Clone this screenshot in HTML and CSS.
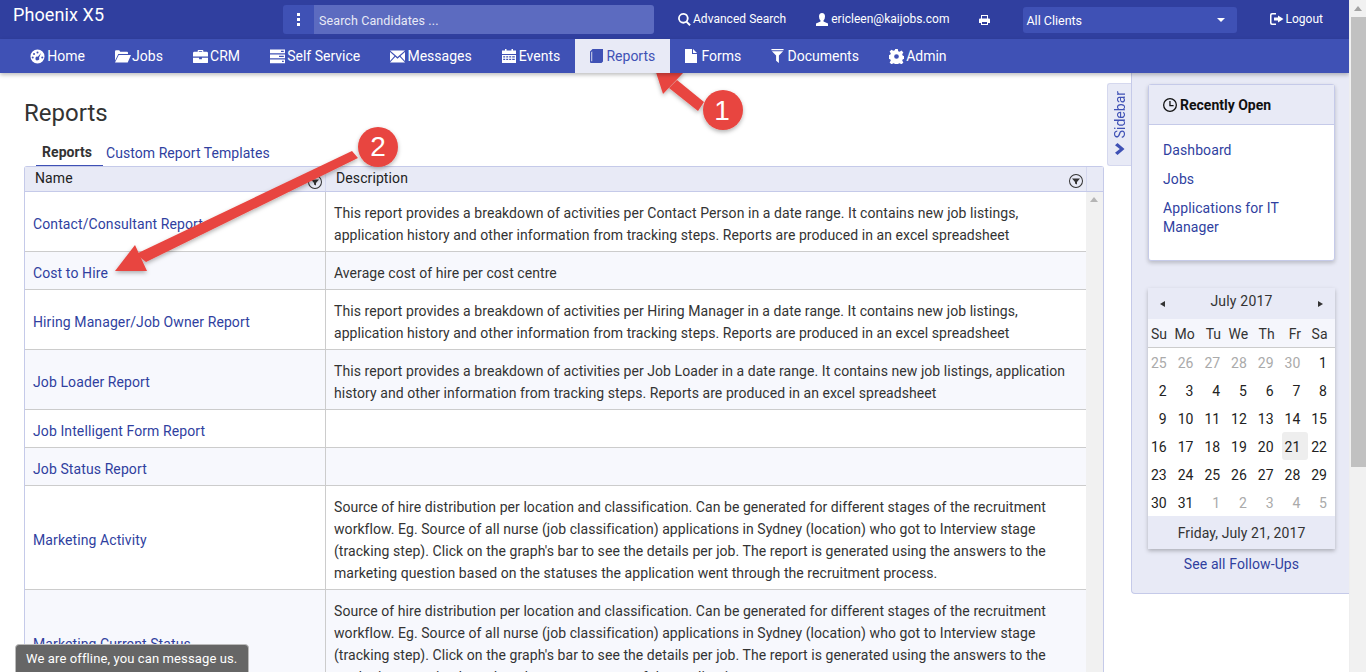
FILE: index.html
```html
<!DOCTYPE html>
<html lang="en">
<head>
<meta charset="utf-8">
<title>Phoenix X5 - Reports</title>
<link rel="stylesheet" href="styles.css">
</head>
<body>
<svg class="defs" width="0" height="0" aria-hidden="true">
  <symbol id="i-home" viewBox="0 0 16 16"><path fill-rule="evenodd" d="M8 .5a7.5 7.5 0 1 1 0 15 7.500 7.500 0 0 1 0-15zM8 2.600a1.100 1.100 0 1 0 0 2.200 1.100 1.100 0 0 0 0-2.200zM4.300 4.300a1.100 1.100 0 1 0 0 2.200 1.100 1.100 0 0 0 0-2.200zM2.900 8a1.100 1.100 0 1 0 0 2.200 1.100 1.100 0 0 0 0-2.200zM13.100 8a1.100 1.100 0 1 0 0 2.200 1.100 1.100 0 0 0 0-2.200zM11.800 4.300L8.300 8.200a2 2 0 1 0 1.300 1.100z"/></symbol>
  <symbol id="i-folder" viewBox="0 0 17 14"><path d="M0 12V2.200Q0 1 1.200 1h3.300l1 1.500h7.300q1 0 1 1V5H3.500L0 12zM4 6h13l-3.500 8H0z"/></symbol>
  <symbol id="i-case" viewBox="0 0 16 14"><path fill-rule="evenodd" d="M5 2V.8Q5 0 5.800 0h4.400q.8 0 .8.800V2h3.500q1.500 0 1.500 1.500V7H0V3.500Q0 2 1.500 2zM6.200 1v1h3.600V1zM0 8.200h6.500V10h3V8.200H16V13q0 1-1 1H1q-1 0-1-1z"/></symbol>
  <symbol id="i-tasks" viewBox="0 0 15 14"><path fill-rule="evenodd" d="M0 0h15v3.800H0zM11 1.200v1.400h2.800V1.200zM0 5h15v3.800H0zM9 6.200v1.400h4.800V6.200zM0 10h15v3.800H0zM12 11.200v1.400h1.800v-1.400z"/></symbol>
  <symbol id="i-mail" viewBox="0 0 15 12"><path d="M0 0h15L7.500 6.500zM0 1.500l4.500 4L0 10.500zM15 1.500l-4.500 4 4.500 5zM5.300 6.200l2.200 2 2.200-2L15 12H0z"/></symbol>
  <symbol id="i-cal" viewBox="0 0 14 14"><path fill-rule="evenodd" d="M0 1.500h3V0h1.500v1.500h5V0H11v1.500h3V5H0zM0 6h14v8H0zM1.200 7.200v1.300h2V7.200zM4.200 7.200v1.300h2V7.200zM7.200 7.200v1.300h2V7.200zM10.200 7.200v1.300h2.600V7.200zM1.200 9.700V11h2V9.700zM4.200 9.700V11h2V9.700zM7.200 9.700V11h2V9.700zM10.200 9.700V11h2.600V9.700z"/></symbol>
  <symbol id="i-book" viewBox="0 0 13 14"><path fill-rule="evenodd" d="M2.500 0H13v12.500L11.500 14H1q-1 0-1-1V2.500zM1.300 3.200V12.300h.9V2.300z"/></symbol>
  <symbol id="i-file" viewBox="0 0 12 14"><path d="M0 0h7v5h5v9H0zM8 0l4 4H8z"/></symbol>
  <symbol id="i-filter" viewBox="0 0 13 15"><path d="M0 0h13v1.300H0zM.5 2.300h12L8 7v8l-3-2.500V7z"/></symbol>
  <symbol id="i-cog" viewBox="0 0 14 14"><path fill-rule="evenodd" d="M5.800 0h2.400l.4 2 1.300.6 1.800-1.100 1.700 1.700-1.100 1.800.6 1.300 2 .4v2.400l-2 .4-.6 1.300 1.100 1.800-1.700 1.700-1.800-1.100-1.300.6-.4 2H5.800l-.4-2-1.300-.6-1.800 1.100-1.700-1.700 1.100-1.800-.6-1.300-2-.4V5.800l2-.4.6-1.300L.6 2.300 2.300.6l1.800 1.100 1.300-.6zM7 4.800a2.200 2.200 0 1 0 0 4.400 2.200 2.200 0 0 0 0-4.400z"/></symbol>
  <symbol id="i-search" viewBox="0 0 13 13"><path fill-rule="evenodd" d="M5.300 0a5.300 5.300 0 0 1 4.300 8.400l3.200 3.200-1.400 1.400-3.200-3.200A5.300 5.300 0 1 1 5.300 0zm0 1.800a3.500 3.500 0 1 0 0 7 3.500 3.500 0 0 0 0-7z"/></symbol>
  <symbol id="i-user" viewBox="0 0 12 13"><path d="M6 0q3 0 3 3.500Q9 6 7.500 7.500v1L12 10.500V13H0v-2.500l4.500-2v-1Q3 6 3 3.500 3 0 6 0z"/></symbol>
  <symbol id="i-print" viewBox="0 0 11 10"><path fill-rule="evenodd" d="M2 0h7v3.500h1q1 0 1 1V8H9v2H2V8H0V4.500q0-1 1-1h1zM3 1v2.500h5V1zM3 7v2h5V7z"/></symbol>
  <symbol id="i-logout" viewBox="0 0 14 12"><path d="M0 2q0-2 2-2h4v1.500H2.500q-1 0-1 1v7q0 1 1 1H6V12H2q-2 0-2-2zM8 2.500l5.500 3.500L8 9.500V7.500H4v-3h4z"/></symbol>
  <symbol id="i-clock" viewBox="0 0 14 14"><path fill-rule="evenodd" d="M7 0a7 7 0 1 1 0 14A7 7 0 0 1 7 0zm0 1.300a5.700 5.700 0 1 0 0 11.400A5.700 5.700 0 0 0 7 1.300zM6.300 3h1.300v4h3v1.300H6.300z"/></symbol>
  <symbol id="i-col" viewBox="0 0 14 14"><path fill-rule="evenodd" d="M7 0a7 7 0 1 1 0 14A7 7 0 0 1 7 0zm0 1a6 6 0 1 0 0 12A6 6 0 0 0 7 1zM3 4.500h8L8 8v2.500L6 9.500V8z"/></symbol>
</svg>

<div class="page">
  <div class="frame">
    <header class="topbar">
      <div class="brand">Phoenix X5</div>
      <div class="search">
        <span class="search-menu"><i></i><i></i><i></i></span>
        <span class="search-input">Search Candidates ...</span>
      </div>
      <a class="top-link adv"><svg class="ic w13"><use href="#i-search"/></svg>Advanced Search</a>
      <a class="top-link email"><svg class="ic w12"><use href="#i-user"/></svg>ericleen@kaijobs.com</a>
      <a class="top-print"><svg class="ic w11"><use href="#i-print"/></svg></a>
      <div class="client"><span>All Clients</span><b class="caret"></b></div>
      <a class="top-link logout"><svg class="ic w14"><use href="#i-logout"/></svg>Logout</a>
    </header>

    <nav class="navbar">
      <a class="nav-item"><svg class="ic n15"><use href="#i-home"/></svg>Home</a>
      <a class="nav-item"><svg class="ic n17"><use href="#i-folder"/></svg>Jobs</a>
      <a class="nav-item"><svg class="ic n15"><use href="#i-case"/></svg>CRM</a>
      <a class="nav-item"><svg class="ic n15"><use href="#i-tasks"/></svg>Self Service</a>
      <a class="nav-item"><svg class="ic n15"><use href="#i-mail"/></svg>Messages</a>
      <a class="nav-item"><svg class="ic n14"><use href="#i-cal"/></svg>Events</a>
      <a class="nav-item active"><svg class="ic n13"><use href="#i-book"/></svg>Reports</a>
      <a class="nav-item"><svg class="ic n12"><use href="#i-file"/></svg>Forms</a>
      <a class="nav-item"><svg class="ic n13"><use href="#i-filter"/></svg>Documents</a>
      <a class="nav-item"><svg class="ic n15"><use href="#i-cog"/></svg>Admin</a>
    </nav>

    <div class="content">
      <main class="main">
        <h1 class="title">Reports</h1>
        <div class="tabs">
          <a class="tab current">Reports</a>
          <a class="tab">Custom Report Templates</a>
        </div>
        <div class="grid">
          <div class="grid-head">
            <div class="head-cell name">Name<svg class="col-filter"><use href="#i-col"/></svg></div>
            <div class="head-cell desc">Description<svg class="col-filter"><use href="#i-col"/></svg></div>
            <div class="head-end"></div>
          </div>
          <div class="grid-body">
            <table class="rows">
              <tbody>
                <tr><td class="c-name"><a>Contact/Consultant Report</a></td><td class="c-desc">This report provides a breakdown of activities per Contact Person in a date range. It contains new job listings, application history and other information from tracking steps. Reports are produced in an excel spreadsheet</td></tr>
                <tr><td class="c-name"><a>Cost to Hire</a></td><td class="c-desc">Average cost of hire per cost centre</td></tr>
                <tr><td class="c-name"><a>Hiring Manager/Job Owner Report</a></td><td class="c-desc">This report provides a breakdown of activities per Hiring Manager in a date range. It contains new job listings, application history and other information from tracking steps. Reports are produced in an excel spreadsheet</td></tr>
                <tr><td class="c-name"><a>Job Loader Report</a></td><td class="c-desc">This report provides a breakdown of activities per Job Loader in a date range. It contains new job listings, application history and other information from tracking steps. Reports are produced in an excel spreadsheet</td></tr>
                <tr><td class="c-name"><a>Job Intelligent Form Report</a></td><td class="c-desc"></td></tr>
                <tr><td class="c-name"><a>Job Status Report</a></td><td class="c-desc"></td></tr>
                <tr><td class="c-name"><a>Marketing Activity</a></td><td class="c-desc">Source of hire distribution per location and classification. Can be generated for different stages of the recruitment workflow. Eg. Source of all nurse (job classification) applications in Sydney (location) who got to Interview stage (tracking step). Click on the graph's bar to see the details per job. The report is generated using the answers to the marketing question based on the statuses the application went through the recruitment process.</td></tr>
                <tr><td class="c-name"><a>Marketing Current Status</a></td><td class="c-desc">Source of hire distribution per location and classification. Can be generated for different stages of the recruitment workflow. Eg. Source of all nurse (job classification) applications in Sydney (location) who got to Interview stage (tracking step). Click on the graph's bar to see the details per job. The report is generated using the answers to the marketing question based on the current status of the application.</td></tr>
              </tbody>
            </table>
            <div class="inner-scroll"><b class="arrow-up"></b></div>
          </div>
        </div>
      </main>

      <a class="side-tab">
        <span class="side-label">Sidebar</span>
        <svg class="side-chev" viewBox="0 0 10 12"><path d="M2.500 0L9.500 6l-7 6L0 9.800 4.800 6 0 2.200z"/></svg>
      </a>

      <aside class="sidebar">
        <section class="card">
          <div class="card-head"><svg class="ic n14"><use href="#i-clock"/></svg>Recently Open</div>
          <div class="card-body">
            <a>Dashboard</a>
            <a>Jobs</a>
            <a>Applications for IT Manager</a>
          </div>
        </section>

        <section class="cal">
          <div class="cal-head"><b class="tri left"></b><span>July 2017</span><b class="tri right"></b></div>
          <div class="cal-grid cal-days">
            <span>Su</span><span>Mo</span><span>Tu</span><span>We</span><span>Th</span><span>Fr</span><span>Sa</span>
          </div>
          <div class="cal-grid cal-dates">
            <span class="off">25</span><span class="off">26</span><span class="off">27</span><span class="off">28</span><span class="off">29</span><span class="off">30</span><span>1</span>
            <span>2</span><span>3</span><span>4</span><span>5</span><span>6</span><span>7</span><span>8</span>
            <span>9</span><span>10</span><span>11</span><span>12</span><span>13</span><span>14</span><span>15</span>
            <span>16</span><span>17</span><span>18</span><span>19</span><span>20</span><span class="today">21</span><span>22</span>
            <span>23</span><span>24</span><span>25</span><span>26</span><span>27</span><span>28</span><span>29</span>
            <span>30</span><span>31</span><span class="off">1</span><span class="off">2</span><span class="off">3</span><span class="off">4</span><span class="off">5</span>
          </div>
          <div class="cal-foot">Friday, July 21, 2017</div>
        </section>
        <a class="followups">See all Follow-Ups</a>
      </aside>
    </div>
  </div>

  <div class="scrollbar"><b class="arrow-up"></b><div class="thumb"></div></div>
</div>

<svg class="callouts" viewBox="0 0 1366 672" aria-hidden="true">
  <defs>
    <filter id="sh" x="-20%" y="-20%" width="140%" height="140%"><feDropShadow dx="0" dy="2" stdDeviation="2" flood-color="#000" flood-opacity=".3"/></filter>
  </defs>
  <g filter="url(#sh)" fill="#e8453f">
    <path d="M677 80L704 102 698 111 669 88z"/>
    <path d="M653 63L684 72L663 94z"/>
    <circle cx="723" cy="110" r="20"/>
    <path d="M352 151L358 158 146 262 136 254z"/>
    <path d="M115 271L135 245L147 271z"/>
    <circle cx="378" cy="147" r="20"/>
  </g>
  <text class="callout-num" x="722" y="120">1</text>
  <text class="callout-num" x="378" y="156">2</text>
</svg>

<div class="chat">We are offline, you can message us.</div>
</body>
</html>
```

FILE: styles.css
```css
* { box-sizing: border-box; }
html, body { margin: 0; height: 100%; overflow: hidden; }
body {
  font-family: Roboto, "Liberation Sans", sans-serif;
  font-size: 14px;
  color: #333;
  background: #fff;
}
a { text-decoration: none; color: #303f9f; }
.defs { position: absolute; }
.ic { fill: currentColor; flex: none; display: block; }

.page { display: flex; height: 672px; }
.frame { flex: 1; min-width: 0; display: flex; flex-direction: column; overflow: hidden; }

.scrollbar { width: 17px; background: #f1f1f1; display: flex; flex-direction: column; align-items: center; border-left: 1px solid #eee; }
.scrollbar .arrow-up { margin: 6px 0 6px; }
.thumb { width: 15px; margin-left: 1px; height: 450px; background: #c1c1c1; }
.arrow-up { display: block; width: 0; height: 0; border: 4px solid transparent; border-top: 0; border-bottom: 5px solid #a3a3a3; }

/* top bar */
.topbar { height: 39px; flex: none; background: #303f9f; display: flex; align-items: flex-start; color: #fff; }
.brand { width: 283px; padding: 4px 0 0 13px; font-size: 18px; line-height: 22px; letter-spacing: .1px; }
.search { width: 371px; height: 29px; margin-top: 5px; display: flex; border-radius: 3px; overflow: hidden; }
.search-menu { width: 31px; background: #3f51b5; display: flex; flex-direction: column; align-items: center; justify-content: center; gap: 2px; }
.search-menu i { width: 3px; height: 3px; background: #fff; display: block; }
.search-input { flex: 1; background: #5c6bc0; padding-left: 5px; line-height: 31px; font-size: 12.5px; color: #e8eaf6; letter-spacing: .1px; }
.top-link { display: flex; align-items: center; gap: 2px; color: #fff; font-size: 12px; height: 18px; margin-top: 10px; letter-spacing: .03px; }
.adv { margin-left: 24px; }
.w13 { width: 13px; height: 13px; }
.w12 { width: 12px; height: 13px; }
.w11 { width: 11px; height: 10px; }
.w14 { width: 14px; height: 12px; }
.email { margin-left: 30px; }
.email .ic { margin-right: 1px; }
.top-print { color: #fff; margin: 15px 0 0 30px; }
.client { width: 214px; height: 26px; margin: 7px 0 0 33px; background: #3f51b5; border-radius: 3px; display: flex; align-items: center; justify-content: space-between; padding: 0 12px 0 3px; font-size: 12.5px; }
.caret { width: 0; height: 0; border: 4px solid transparent; border-bottom: 0; border-top: 4px solid #fff; }
.logout { margin-left: 33px; gap: 1px; }

/* nav bar */
.navbar { height: 34px; flex: none; background: #3f51b5; display: flex; padding-left: 15px; box-shadow: 0 2px 4px rgba(0,0,0,.25); position: relative; z-index: 1; }
.nav-item { display: flex; align-items: center; gap: 2px; padding: 0 15px 0 15.200px; color: #fff; font-size: 14px; }
.nav-item.active { background: #e8eaf6; color: #3f51b5; }
.n15 { width: 15px; height: 15px; }
.n17 { width: 16px; height: 14px; margin-right: -1px; }
.n14 { width: 14px; height: 14px; }
.n13 { width: 13px; height: 14px; }
.n12 { width: 12px; height: 14px; }
.nav-item .n14, .nav-item .n13 { margin-right: 1px; }
.nav-item .n12 { margin-right: 2px; }

/* content */
.content { flex: 1; min-height: 0; display: flex; align-items: flex-start; }
.main { width: 1107px; flex: none; padding: 0 3px 0 24px; }
.title { margin: 0; padding-top: 25px; font-size: 24px; font-weight: 400; line-height: 30px; color: #333; }
.tabs { display: flex; height: 38px; padding: 0 0 0 12px; align-items: flex-end; }
.tab { display: block; font-size: 14px; line-height: 25px; padding: 0; letter-spacing: .05px; }
.tab.current { height: 26px; padding: 0 11px 0 6px; margin-right: 3px; font-weight: 700; color: #333; border-bottom: 1px solid #3f51b5; }

.grid { width: 1080px; border: 1px solid #c5cae9; border-bottom: 0; border-radius: 3px 3px 0 0; }
.grid-head { display: flex; height: 25px; background: #e8eaf6; border-bottom: 1px solid #c5cae9; color: #222; }
.head-cell { position: relative; line-height: 23px; padding-left: 10px; font-size: 14px; border-right: 1px solid #d5d8ee; letter-spacing: .1px; }
.head-cell.name { width: 301px; }
.head-cell.desc { width: 761px; }
.head-end { flex: 1; }
.col-filter { position: absolute; right: 3px; top: 8px; width: 14px; height: 14px; fill: #333; }
.head-cell.desc .col-filter { top: 7px; right: 3px; }

.grid-body { display: flex; }
.rows { width: 1061px; flex: none; table-layout: fixed; border-collapse: separate; border-spacing: 0; }
.rows tr:nth-child(even) { background: #f7f8fd; }
.rows td { padding: 10px 8px 5px; line-height: 22px; border-bottom: 1px solid #ccc; vertical-align: middle; font-size: 14px; }
.c-name { width: 301px; border-right: 1px solid #ccc; padding-right: 0 !important; letter-spacing: .1px; }
.c-desc { height: 38px; color: #333; letter-spacing: .065px; }
.inner-scroll { flex: 1; background: #f1f1f1; padding: 5px 0 0 4px; }
.inner-scroll .arrow-up { border-bottom-color: #b5b5b5; }

/* sidebar tab */
.side-tab { width: 24px; height: 83px; flex: none; margin-top: 10px; background: #e8eaf6; border: 1px solid #d5d8ee; border-right: 0; border-radius: 3px 0 0 3px; display: flex; flex-direction: column; align-items: center; color: #3f51b5; padding-top: 7px; gap: 5px; }
.side-label { writing-mode: vertical-rl; transform: rotate(180deg); font-size: 14px; line-height: 20px; margin-left: 1px; }
.side-chev { width: 10px; height: 12px; fill: #3f51b5; }

/* sidebar */
.sidebar { width: 218px; flex: none; height: 521px; background: #e8eaf6; border-left: 1px solid #c5cae9; border-bottom: 1px solid #c5cae9; border-bottom-left-radius: 4px; padding: 11px 14px 0 16px; }
.card { background: #fff; border: 1px solid #c5cae9; border-radius: 3px; height: 177px; box-shadow: 0 2px 4px rgba(0,0,0,.2); }
.card-head { height: 40px; background: #e8eaf6; border-bottom: 1px solid #c5cae9; display: flex; align-items: center; gap: 3px; padding-left: 14px; font-weight: 700; font-size: 14px; color: #111; }
.card-body { padding: 16px 14px 0; display: flex; flex-direction: column; gap: 10px; }
.card-body a { line-height: 19px; font-size: 14px; letter-spacing: .1px; }

.cal { margin-top: 27px; box-shadow: 0 2px 4px rgba(0,0,0,.25); background: #fff; }
.cal-head { height: 31px; background: #e8eaf6; display: flex; align-items: center; justify-content: space-between; padding: 0 12px 5px; font-size: 14px; color: #333; letter-spacing: .2px; }
.tri { width: 0; height: 0; border: 3.500px solid transparent; margin-top: 5px; }
.tri.left { border-left: 0; border-right: 5px solid #333; }
.tri.right { border-right: 0; border-left: 5px solid #333; }
.cal-grid { display: grid; grid-template-columns: repeat(7, 1fr); text-align: right; }
.cal-days { height: 29px; background: #f5f6fc; border-bottom: 1px solid #ccc; align-items: center; font-size: 14px; }
.cal-days span { padding-right: 7.500px; line-height: 30px; }
.cal-dates { grid-auto-rows: 28px; font-size: 14px; color: #222; align-items: stretch; }
.cal-dates span { line-height: 30px; padding-right: 8px; border-radius: 3px; }
.cal-dates .off { color: #aaa; }
.cal-dates .today { background: #eee; }
.cal-foot { height: 33px; background: #e8eaf6; text-align: center; line-height: 35px; font-size: 14px; color: #333; letter-spacing: .1px; }
.followups { display: block; text-align: center; line-height: 19px; margin-top: 6px; font-size: 14px; letter-spacing: .1px; }

/* overlays */
.callouts { position: absolute; left: 0; top: 0; width: 1366px; height: 672px; pointer-events: none; }
.callout-num { fill: #fff; font-size: 28px; text-anchor: middle; font-family: "Liberation Sans", Arial, sans-serif; }
.chat { position: absolute; left: 15px; bottom: -4px; width: 234px; height: 32px; background: #666; color: #fff; border: 1px solid #bbb; border-radius: 4px 4px 0 0; padding-left: 10px; line-height: 27px; font-size: 13px; letter-spacing: .12px; white-space: nowrap; }
```
